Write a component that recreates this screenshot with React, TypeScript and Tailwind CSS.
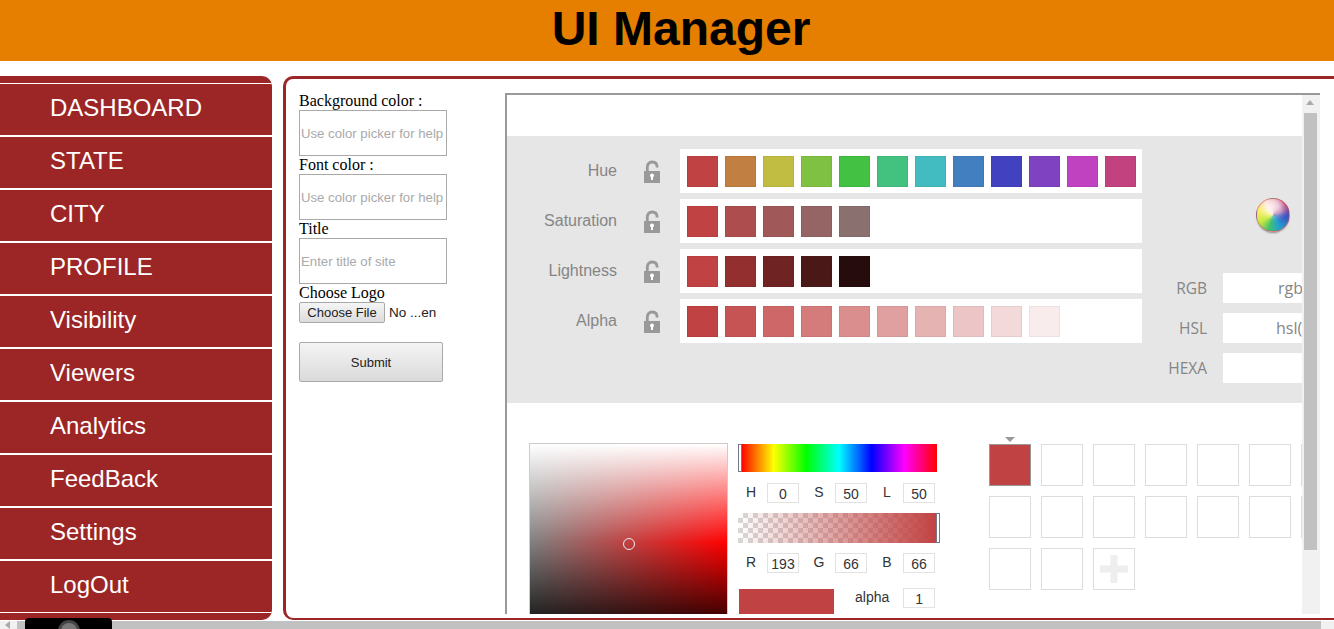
import React from "react";

const navItems = ["DASHBOARD", "STATE", "CITY", "PROFILE", "Visibility", "Viewers", "Analytics", "FeedBack", "Settings", "LogOut"];

const hueColors = ["#c14242", "#c17f42", "#c1bc42", "#7fc142", "#42c142", "#42c17f", "#42bcc1", "#427fc1", "#4242c1", "#7f42c1", "#c142c1", "#c1427f"];
const satColors = ["#c14242", "#ae4d4d", "#a05858", "#956464", "#8b7070"];
const lightColors = ["#c14242", "#932f2f", "#6f2323", "#4b1818", "#260c0c"];
const alphaColors = ["#c14242", "#c75454", "#ce6868", "#d47b7b", "#da8e8e", "#e0a0a0", "#e6b3b3", "#ecc6c6", "#f3d9d9", "#f9ecec"];

const rows = [
  { label: "Hue", colors: hueColors },
  { label: "Saturation", colors: satColors },
  { label: "Lightness", colors: lightColors },
  { label: "Alpha", colors: alphaColors },
];

const LockIcon = () => (
  <svg width="16" height="23" viewBox="0 0 16 23" className="ml-[27px] shrink-0">
    <path d="M3.300 12V7.500C3.300 4 5 2 8.200 2s5 2 5 5.500" fill="none" stroke="#999" strokeWidth="2.800" />
    <rect x="0" y="11" width="16" height="12" fill="#999" />
    <circle cx="8" cy="15.500" r="2" fill="#fff" />
    <rect x="7" y="16" width="2" height="4" fill="#fff" />
  </svg>
);

const ColorOrb = () => (
  <div className="relative ml-[114px] w-[34px] h-[34px] rounded-full overflow-hidden border border-[#d9534f]/60 shadow-[0_2px_2px_-1px_#888] bg-[conic-gradient(from_0deg,#f0b0c0,#b04080_50deg,#3a50c0_95deg,#20a0d0_150deg,#40c070_195deg,#c8e840_240deg,#f8f070_290deg,#f8e0d0_330deg,#f0b0c0)]">
    <span className="absolute left-[7px] top-[1px] w-[20px] h-[16px] rounded-full bg-white/70 blur-[3px]" />
  </div>
);

const TextField = ({ placeholder }: { placeholder: string }) => (
  <input
    type="text"
    placeholder={placeholder}
    className="block w-[148px] h-[46px] border border-[#a9a9a9] px-[1px] text-[13.200px] font-['Liberation_Sans',sans-serif] placeholder:text-[#a9a9a9]"
  />
);

const SmallBox = ({ value }: { value: string }) => (
  <div className="w-[32px] h-[20px] border border-[#e2e2e2] text-center text-[14px] leading-[20px] text-[#333]">{value}</div>
);

const ValueRow = ({ items }: { items: string[][] }) => (
  <div className="flex items-center h-[20px] pl-[1px]">
    {items.map(([label, value]) => (
      <div key={label} className="flex items-center">
        <span className="w-[28px] pr-[4px] mb-[2px] text-center text-[14px] text-[#333]">{label}</span>
        <SmallBox value={value} />
        <span className="w-[8px]" />
      </div>
    ))}
  </div>
);

const ColorField = ({ label, value, pad }: { label: string; value: string; pad: string }) => (
  <div className="flex items-center">
    <span className="w-[65px] pt-[1px] text-right text-[15.500px] text-[#858585]">{label}</span>
    <div className={`ml-[16px] w-[79px] h-[30px] bg-white overflow-hidden whitespace-nowrap text-[16px] leading-[30px] text-[#858585] ${pad}`}>{value}</div>
  </div>
);

const savedSlots = Array.from({ length: 17 });

export default function App() {
  return (
    <div className="relative w-[1334px] h-[629px] overflow-hidden bg-white font-['Liberation_Sans',sans-serif]">
      <header className="h-[61px] bg-[#e67e00] text-center text-[48px] font-bold leading-[57px] text-black pl-[28px]">UI Manager</header>

      <div className="flex items-start mt-[15px] h-[545px] gap-[11px]">
        <nav className="w-[272px] h-[544px] shrink-0 rounded-r-[10px] bg-[#9c2626] pt-[7px] overflow-hidden">
          {navItems.map((item) => (
            <div key={item} className="h-[53px] first:h-[52px] border-t-2 first:border-t border-white pl-[50px] text-[24px] leading-[48px] text-white">
              {item}
            </div>
          ))}
          <div className="h-[1px] bg-white" />
        </nav>

        <main className="flex-1 h-[544px] flex border-[3px] border-r-0 border-b-2 border-[#9c2626] rounded-l-[10px] overflow-hidden pl-[13px] pt-[13px] min-w-0">
          <form className="w-[206px] shrink-0 font-['Liberation_Serif',serif] text-[16px] leading-[18px] text-black">
            <label className="block">Background color :</label>
            <TextField placeholder="Use color picker for help" />
            <label className="block">Font color :</label>
            <TextField placeholder="Use color picker for help" />
            <label className="block">Title</label>
            <TextField placeholder="Enter title of site" />
            <label className="block">Choose Logo</label>
            <div className="flex items-center font-['Liberation_Sans',sans-serif] text-[13px] text-[#222]">
              <button type="button" className="w-[86px] h-[21px] border border-[#a9a9a9] rounded-[2px] bg-[linear-gradient(#f5f5f5,#dcdcdc)] leading-[18px]">Choose File</button>
              <span className="ml-[4px] text-[13.500px]">No ...en</span>
            </div>
            <button type="button" className="block mt-[19px] pt-[1px] w-[144px] h-[40px] border border-[#a9a9a9] rounded-[2px] bg-[linear-gradient(#f4f4f4,#dadada)] font-['Liberation_Sans',sans-serif] text-[13px] text-[#222]">Submit</button>
          </form>

          <div className="w-[815px] h-[521px] mt-[1px] shrink-0 flex border-2 border-r-0 border-b-0 border-[#999] overflow-hidden">
            <div className="w-[795px] shrink-0 overflow-hidden">
              <div className="h-[41px] bg-white" />
              <section className="flex h-[267px] bg-[#e6e6e6]">
                <div className="w-[635px] shrink-0 flex flex-col gap-[6px] pt-[13px]">
                  {rows.map((row) => (
                    <div key={row.label} className="flex items-center h-[44px]">
                      <span className="w-[110px] text-right text-[16px] text-[#858585]">{row.label}</span>
                      <LockIcon />
                      <div className="ml-[20px] w-[462px] h-[44px] bg-white flex items-center gap-[7px] pl-[7px]">
                        {row.colors.map((color) => (
                          <span key={color} className="w-[31px] h-[31px] border border-black/5" style={{ backgroundColor: color }} />
                        ))}
                      </div>
                    </div>
                  ))}
                </div>
                <div className="flex-1 pt-[62px] font-['Open_Sans',sans-serif]">
                  <ColorOrb />
                  <div className="mt-[41px] flex flex-col gap-[10px]">
                    <ColorField label="RGB" value="rgb(193, 66, 66)" pad="pl-[55px]" />
                    <ColorField label="HSL" value="hsl(0, 50%, 50%)" pad="pl-[53px]" />
                    <ColorField label="HEXA" value="" pad="" />
                  </div>
                </div>
              </section>

              <section className="flex pt-[40px] pl-[22px]">
                <div className="w-[199px] h-[199px] border border-[#ccc] shrink-0 bg-[linear-gradient(to_bottom,#fff,rgba(255,255,255,0)_50%,rgba(0,0,0,0)_50%,#000),linear-gradient(to_right,#808080,#f00)] relative">
                  <span className="absolute left-[93px] top-[94px] w-[12px] h-[12px] rounded-full border border-[#eee]" />
                </div>

                <div className="ml-[10px] w-[202px] shrink-0">
                  <div className="relative ml-[3px] w-[196px] h-[28px] mt-[1px] bg-[linear-gradient(to_right,#f00,#ff0,#0f0,#0ff,#00f,#f0f,#f00)]">
                    <span className="absolute left-[-3px] top-0 w-[4px] h-[28px] border border-[#778] bg-white" />
                  </div>
                  <div className="mt-[11px]"><ValueRow items={[["H", "0"], ["S", "50"], ["L", "50"]]} /></div>
                  <div className="relative mt-[10px] w-[199px] h-[30px] bg-[repeating-conic-gradient(#d8d8d8_0_25%,#fff_0_50%)] bg-[length:10px_10px]">
                    <div className="h-full bg-[linear-gradient(to_right,rgba(193,66,66,0),#c14242)]" />
                    <span className="absolute right-[-3px] top-0 w-[4px] h-[30px] border border-[#778] bg-white" />
                  </div>
                  <div className="mt-[10px]"><ValueRow items={[["R", "193"], ["G", "66"], ["B", "66"]]} /></div>
                  <div className="flex mt-[15px]">
                    <div className="ml-[1px] mt-[1px] w-[95px] h-[30px] bg-[#c14242]" />
                    <span className="ml-[21px] text-[14px] text-[#333] leading-[18px]">alpha</span>
                    <div className="ml-[14px]"><SmallBox value="1" /></div>
                  </div>
                </div>

                <div className="relative ml-[49px] w-[320px] h-[146px] shrink-0 mt-[1px] grid grid-cols-[repeat(7,42px)] auto-rows-[42px] gap-[10px]">
                  <span className="absolute left-[16px] top-[-7px] border-x-[5px] border-t-[5px] border-x-transparent border-t-[#999]" />
                  {savedSlots.map((_, i) =>
                    i === 0 ? (
                      <div key={i} className="bg-[#c14242] border border-[#999]" />
                    ) : i === 16 ? (
                      <div key={i} className="border border-[#ddd] flex items-center justify-center">
                        <svg width="28" height="28" viewBox="0 0 28 28"><path d="M10.500 0h7v10.500H28v7H17.500V28h-7V17.500H0v-7h10.500z" fill="#eee" /></svg>
                      </div>
                    ) : (
                      <div key={i} className="border border-[#ddd]" />
                    ),
                  )}
                </div>
              </section>
            </div>

            <div className="w-[18px] shrink-0 bg-[#f1f1f1] pt-[4px] pl-[2px]">
              <div className="h-[14px] flex justify-center pt-[1px] pr-[4px]">
                <span className="border-x-[4px] border-b-[5px] border-x-transparent border-b-[#aaa] h-0" />
              </div>
              <div className="w-[13px] h-[437px] bg-[#c1c1c1]" />
            </div>
          </div>
        </main>
      </div>

      <div className="flex h-[8px] bg-[#f1f1f1]">
        <div className="w-[17px] flex items-center pl-[5px]">
          <span className="border-y-[4px] border-r-[5px] border-y-transparent border-r-[#aaa]" />
        </div>
        <div className="w-[1304px] bg-[#c1c1c1]" />
      </div>

      <div className="absolute left-[25px] bottom-0 w-[87px] h-[11px] bg-black rounded-t-[4px] flex justify-center overflow-hidden">
        <svg width="30" height="11" viewBox="0 0 30 11" className="shrink-0">
          <circle cx="15" cy="13" r="11" fill="#444" />
          <circle cx="15" cy="13" r="8" fill="#777" />
        </svg>
      </div>
    </div>
  );
}
